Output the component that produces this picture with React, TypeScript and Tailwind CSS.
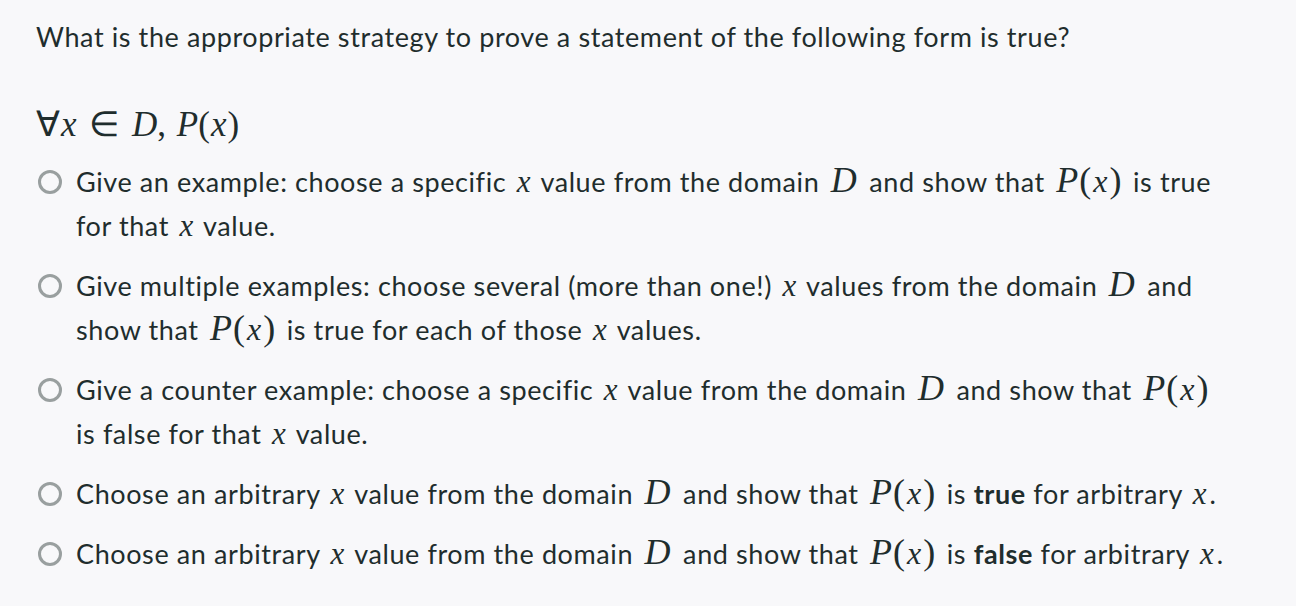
import React from "react";

// inline math piece, KaTeX-ish look
const M: React.FC<{ children: React.ReactNode; small?: boolean }> = ({ children, small }) => (
  <span
    className={`font-['Liberation_Serif',serif] leading-none tracking-normal ${
      small ? "mx-[3px] text-[31px]" : "mx-[4px] text-[36px]"
    }`}
  >
    {children}
  </span>
);

const X = () => (
  <M small>
    <i>x</i>
  </M>
);
const D = () => (
  <M>
    <i className="pr-[1px]">D</i>
  </M>
);
const Px = () => (
  <M>
    <i className="pr-[1px]">P</i>(<i className="px-[2px] text-[32px]">x</i>)
  </M>
);

interface Option {
  id: number;
  body: React.ReactNode;
}

const options: Option[] = [
  {
    id: 1,
    body: (
      <>
        Give an example: choose a specific <X /> value from the domain <D /> and show that <Px /> is true
        <br />
        for that <X /> value.
      </>
    ),
  },
  {
    id: 2,
    body: (
      <>
        Give multiple examples: choose several (more than one!) <X /> values from the domain <D /> and
        <br />
        show that <Px /> is true for each of those <X /> values.
      </>
    ),
  },
  {
    id: 3,
    body: (
      <>
        Give a counter example: choose a specific <X /> value from the domain <D /> and show that <Px />
        <br />
        is false for that <X /> value.
      </>
    ),
  },
  {
    id: 4,
    body: (
      <>
        Choose an arbitrary <X /> value from the domain <D /> and show that <Px /> is{" "}
        <b className="font-bold">true</b> for arbitrary <X />.
      </>
    ),
  },
  {
    id: 5,
    body: (
      <>
        Choose an arbitrary <X /> value from the domain <D /> and show that <Px /> is{" "}
        <b className="font-bold">false</b> for arbitrary <X />.
      </>
    ),
  },
];

const App: React.FC = () => {
  return (
    <div className="min-h-screen w-full bg-[#f8f8fa] text-[#1f2d2d] font-['Lato',sans-serif] text-[27px] tracking-[0.6px]">
      <div className="pl-[36px] pr-[20px] pt-[19px]">
        <p className="leading-[36px] whitespace-nowrap">
          What is the appropriate strategy to prove a statement of the following form is true?
        </p>

        {/* the statement itself */}
        <div className="mt-[48px] font-['Liberation_Serif',serif] text-[35px] leading-[44px] tracking-normal">
          ∀<i className="pl-[1px]">x</i> <span className="px-[4px]">∈</span> <i>D</i>,{" "}
          <i className="pl-[2px]">P</i>(<i className="px-[1px]">x</i>)
        </div>

        <div className="mt-[13px] flex flex-col gap-[16px]">
          {options.map((o) => (
            <label key={o.id} className="ml-[2px] flex items-start gap-[14px]">
              <span className="mt-[10px] w-[24px] h-[24px] shrink-0 rounded-full border-[3px] border-[#999f9f]" />
              <span className="leading-[44px] whitespace-nowrap">{o.body}</span>
            </label>
          ))}
        </div>
      </div>
    </div>
  );
};

export default App;
